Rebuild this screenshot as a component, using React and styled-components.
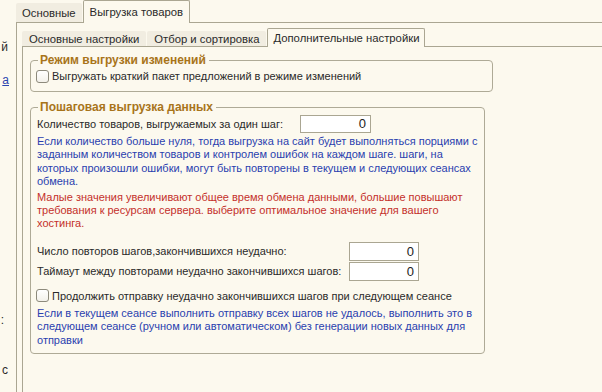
import React from 'react';
import styled, { createGlobalStyle } from 'styled-components';

const Global = createGlobalStyle`
  html, body {
    margin: 0;
    padding: 0;
    background: #fcf9ee;
  }
  body {
    font-family: "Liberation Sans", Arial, sans-serif;
    font-size: 11px;
    color: #2a2a2a;
  }
`;

const Page = styled.div`
  display: flex;
  width: 602px;
  height: 392px;
  overflow: hidden;
`;

const SideStrip = styled.div`
  width: 16px;
  flex: none;
  display: flex;
  flex-direction: column;
`;

const SideLine = styled.div`
  display: flex;
  justify-content: flex-end;
  white-space: nowrap;
  font-size: 12px;
  line-height: 14px;
  margin-top: ${(p) => p.$top}px;
  padding-right: ${(p) => p.$pad}px;
  color: ${(p) => (p.$link ? '#2b44b0' : '#2a2a2a')};
  text-decoration: ${(p) => (p.$link ? 'underline' : 'none')};
`;

const Main = styled.div`
  flex: 1;
  display: flex;
  flex-direction: column;
  min-width: 0;
`;

const TabRow = styled.div`
  display: flex;
  align-items: flex-end;
  height: ${(p) => p.$h}px;
  flex: none;
  position: relative;
  z-index: 1;
`;

const Tab = styled.div`
  box-sizing: border-box;
  height: ${(p) => (p.$active ? p.$h + 1 : p.$h - 3)}px;
  margin-bottom: ${(p) => (p.$active ? -1 : 0)}px;
  margin-right: 1px;
  padding: 0 ${(p) => p.$pad}px;
  display: flex;
  align-items: center;
  white-space: nowrap;
  font-size: 11.3px;
  color: #2a2a2a;
  background: ${(p) => (p.$active ? '#fcf9ee' : '#f1ede1')};
  border: 1px solid ${(p) => (p.$active ? '#aaa692' : 'transparent')};
  border-bottom: none;
  border-radius: 2px 2px 0 0;
`;

const Panel = styled.div`
  flex: 1;
  display: flex;
  flex-direction: column;
  border-top: 1px solid #aaa692;
  border-left: 1px solid #aaa692;
  padding: ${(p) => p.$pt}px 0 0 ${(p) => p.$pl}px;
  min-height: 0;
`;

const Group = styled.fieldset`
  box-sizing: border-box;
  width: ${(p) => p.$w}px;
  margin: ${(p) => p.$mt}px 0 0 0;
  padding: 0 6px ${(p) => p.$pb}px 6px;
  border: 1px solid #aeaa96;
  border-radius: 4px;
`;

const Legend = styled.legend`
  padding: 0 3px 0 2px;
  margin-left: 1px;
  font-size: 12px;
  font-weight: bold;
  color: #a8741a;
  line-height: 14px;
`;

const Row = styled.div`
  display: flex;
  align-items: center;
  height: ${(p) => p.$h}px;
  margin-top: ${(p) => p.$mt || 0}px;
  white-space: nowrap;
`;

const Label = styled.span`
  width: ${(p) => p.$w}px;
  flex: none;
`;

const NumberBox = styled.div`
  box-sizing: border-box;
  width: ${(p) => p.$w}px;
  height: 100%;
  border: 1px solid #aaa692;
  background: #fff;
  text-align: right;
  padding-right: 4px;
  font-size: 13px;
  line-height: ${(p) => p.$lh}px;
  color: #222;
`;

const Check = styled.span`
  box-sizing: border-box;
  width: 13px;
  height: 13px;
  margin-left: -1px;
  margin-right: 3px;
  flex: none;
  border: 1px solid #8d8a7c;
  border-radius: 3px;
  background: linear-gradient(#ffffff, #f3f1ea);
`;

const Note = styled.p`
  margin: ${(p) => p.$mt}px 0 0 0;
  line-height: 13.4px;
  white-space: nowrap;
  color: ${(p) => (p.$tone === 'warn' ? '#c4302b' : '#2a3fae')};
`;

export default function App() {
  return (
    <>
      <Global />
      <Page>
        <SideStrip>
          <SideLine $top={40} $pad={8}>й</SideLine>
          <SideLine $top={19} $pad={7} $link>а</SideLine>
          <SideLine $top={226} $pad={12}>:</SideLine>
          <SideLine $top={36} $pad={8}>с</SideLine>
        </SideStrip>
        <Main>
          <TabRow $h={22}>
            <Tab $h={22} $pad={5}>Основные</Tab>
            <Tab $h={22} $pad={6} $active>Выгрузка товаров</Tab>
          </TabRow>
          <Panel $pt={5} $pl={5}>
            <TabRow $h={18}>
              <Tab $h={18} $pad={6}>Основные настройки</Tab>
              <Tab $h={18} $pad={6}>Отбор и сортировка</Tab>
              <Tab $h={18} $pad={5} $active>Дополнительные настройки</Tab>
            </TabRow>
            <Panel $pt={6} $pl={7}>
              <Group $w={463} $mt={0} $pb={8}>
                <Legend>Режим выгрузки изменений</Legend>
                <Row $h={14} $mt={2}>
                  <Check />
                  Выгружать краткий пакет предложений в режиме изменений
                </Row>
              </Group>
              <Group $w={455} $mt={8} $pb={6}>
                <Legend>Пошаговая выгрузка данных</Legend>
                <Row $h={18} $mt={1}>
                  <Label $w={263}>Количество товаров, выгружаемых за один шаг:</Label>
                  <NumberBox $w={71} $lh={16}>0</NumberBox>
                </Row>
                <Note $mt={2}>
                  Если количество больше нуля, тогда выгрузка на сайт будет выполняться порциями с<br />
                  заданным количеством товаров и контролем ошибок на каждом шаге. шаги, на<br />
                  которых произошли ошибки, могут быть повторены в текущем и следующих сеансах<br />
                  обмена.
                </Note>
                <Note $mt={2} $tone="warn">
                  Малые значения увеличивают общее время обмена данными, большие повышают<br />
                  требования к ресурсам сервера. выберите оптимальное значение для вашего<br />
                  хостинга.
                </Note>
                <Row $h={19} $mt={11}>
                  <Label $w={312}>Число повторов шагов,закончившихся неудачно:</Label>
                  <NumberBox $w={70} $lh={17}>0</NumberBox>
                </Row>
                <Row $h={19} $mt={1}>
                  <Label $w={312}>Таймаут между повторами неудачно закончившихся шагов:</Label>
                  <NumberBox $w={70} $lh={17}>0</NumberBox>
                </Row>
                <Row $h={14} $mt={8}>
                  <Check />
                  Продолжить отправку неудачно закончившихся шагов при следующем сеансе
                </Row>
                <Note $mt={4}>
                  Если в текущем сеансе выполнить отправку всех шагов не удалось, выполнить это в<br />
                  следующем сеансе (ручном или автоматическом) без генерации новых данных для<br />
                  отправки
                </Note>
              </Group>
            </Panel>
          </Panel>
        </Main>
      </Page>
    </>
  );
}
